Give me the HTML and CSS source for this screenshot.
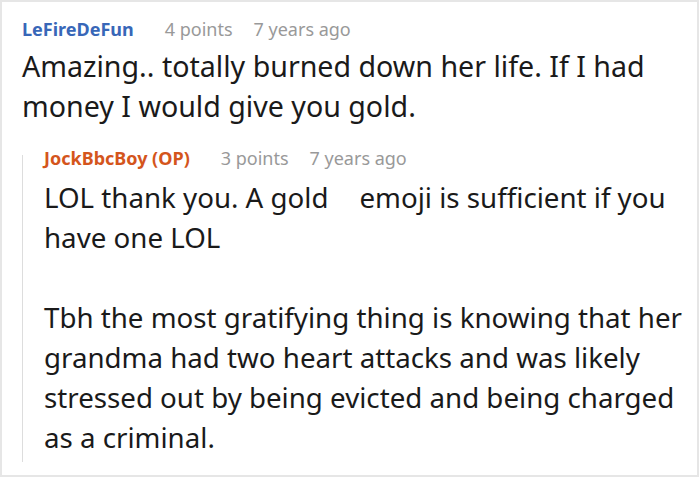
FILE: index.html
```html
<!DOCTYPE html>
<html>
<head>
<meta charset="utf-8">
<link rel="stylesheet" href="styles.css">
</head>
<body>
<div class="thread">
  <div class="comment">
    <div class="meta">
      <span class="author author-blue">LeFireDeFun</span>
      <span class="points">4 points</span>
      <span class="time">7 years ago</span>
    </div>
    <div class="body">
      <p>Amazing.. totally burned down her life. If I had money I would give you gold.</p>
    </div>
  </div>
  <div class="reply">
    <div class="rule"></div>
    <div class="comment reply-content">
      <div class="meta">
        <span class="author author-op">JockBbcBoy (OP)</span>
        <span class="points">3 points</span>
        <span class="time">7 years ago</span>
      </div>
      <div class="body">
        <p>LOL thank you. A <span class="gold">gold</span>emoji is sufficient if you have one LOL</p>
        <p>Tbh the most gratifying thing is knowing that her grandma had two heart attacks and was likely stressed out by being evicted and being charged as a criminal.</p>
      </div>
    </div>
  </div>
</div>
</body>
</html>
```
FILE: styles.css
```css
html, body {
  margin: 0;
  padding: 0;
  background: #ffffff;
}

.thread {
  box-sizing: border-box;
  width: 699px;
  height: 477px;
  border: 2px solid #e6e6e6;
  padding: 15px 6px 0 20px;
  font-family: "Noto Sans", "Open Sans", sans-serif;
  color: #1a1a1a;
  overflow: hidden;
}

.meta {
  display: flex;
  align-items: baseline;
  font-size: 18px;
  line-height: 24px;
  height: 24px;
  margin-bottom: 5px;
  white-space: nowrap;
}

.author {
  font-weight: 700;
  margin-right: 31px;
}

.author-blue {
  color: #3867b8;
}

.author-op {
  color: #d4551c;
}

.points {
  color: #999999;
  margin-right: 21px;
}

.time {
  color: #999999;
}

.body {
  font-size: 28.6px;
  line-height: 40px;
}

.body p {
  margin: 0;
}

.body p + p {
  margin-top: 40px;
}

.gold {
  padding-right: 31px;
}

.reply {
  display: flex;
  margin-top: 20px;
}

.rule {
  width: 1px;
  background: #dddddd;
  margin-top: 9px;
  margin-right: 21px;
  flex: none;
}

.reply-content {
  flex: 1;
  padding-bottom: 5px;
}

.reply-content .meta {
  margin-bottom: 7px;
}

.reply-content .body {
  font-size: 27.7px;
}
```
